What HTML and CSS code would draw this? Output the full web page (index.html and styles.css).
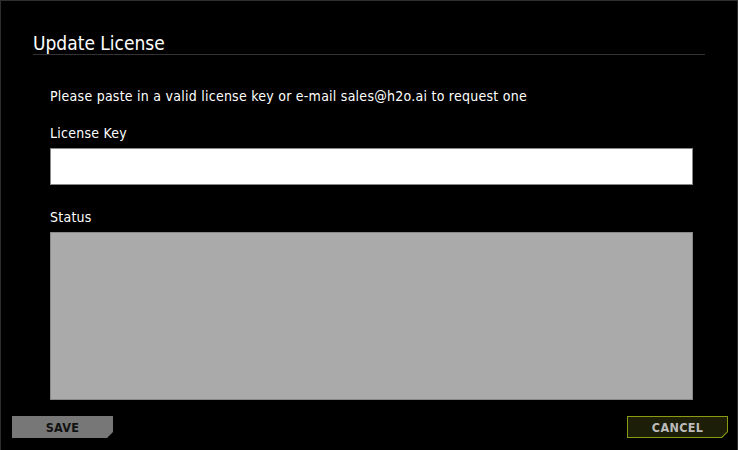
FILE: index.html
```html
<!DOCTYPE html>
<html>
<head>
<meta charset="utf-8">
<link rel="stylesheet" href="styles.css">
</head>
<body>
<div class="dialog">
  <div class="header">
    <h1 class="title">Update License</h1>
  </div>
  <div class="content">
    <p class="intro">Please paste in a valid license key or e-mail sales@h2o.ai to request one</p>
    <label class="label">License Key</label>
    <input class="key-input" type="text">
    <label class="label status-label">Status</label>
    <div class="status-box"></div>
  </div>
  <div class="footer">
    <button class="btn btn-save"><span class="btn-face">SAVE</span></button>
    <button class="btn btn-cancel"><span class="btn-face">CANCEL</span></button>
  </div>
</div>
</body>
</html>
```
FILE: styles.css
```css
html, body {
  margin: 0;
  padding: 0;
  background: #000;
}
body {
  font-family: "DejaVu Sans Condensed", "DejaVu Sans", sans-serif;
  color: #fff;
}
.dialog {
  box-sizing: border-box;
  width: 738px;
  height: 450px;
  border: 1px solid #2e2e2e;
  border-bottom: none;
  display: flex;
  flex-direction: column;
}
.header {
  margin: 0 32px 0 32px;
  padding-top: 31px;
  border-bottom: 1px solid #333;
  height: 22px;
}
.title {
  margin: 0;
  font-size: 19px;
  font-weight: normal;
  line-height: 22px;
  color: #fff;
}
.content {
  margin: 0 44px 0 49px;
  display: flex;
  flex-direction: column;
}
.intro {
  margin: 32px 0 0 0;
  font-size: 14px;
  letter-spacing: 0.25px;
  line-height: 18px;
}
.label {
  margin-top: 19px;
  font-size: 14px;
  letter-spacing: 0.25px;
  line-height: 18px;
}
.key-input {
  box-sizing: border-box;
  margin: 6px 0 0 0;
  height: 37px;
  width: 100%;
  background: #fff;
  border: 1px solid #888;
  outline: none;
}
.status-label {
  margin-top: 23px;
}
.status-box {
  box-sizing: border-box;
  margin-top: 6px;
  height: 168px;
  background: #aaa;
  border: 1px solid #888;
}
.footer {
  margin: 16px 9px 0 11px;
  display: flex;
  justify-content: space-between;
}
.btn {
  width: 101px;
  height: 22px;
  padding: 0;
  border: none;
  font-family: "DejaVu Sans Condensed", "DejaVu Sans", sans-serif;
  font-weight: bold;
  font-size: 12.5px;
  letter-spacing: 0.3px;
  clip-path: polygon(0 0, 100% 0, 100% calc(100% - 6px), calc(100% - 6px) 100%, 0 100%);
}
.btn-face {
  display: flex;
  align-items: center;
  justify-content: center;
  height: 100%;
}
.btn-save {
  background: #777;
  color: #111;
}
.btn-cancel {
  background: #8a9a12;
  color: #bbb;
  padding: 1px;
}
.btn-cancel .btn-face {
  background: #1c1e08;
  clip-path: polygon(0 0, 100% 0, 100% calc(100% - 5.6px), calc(100% - 5.6px) 100%, 0 100%);
}
```
